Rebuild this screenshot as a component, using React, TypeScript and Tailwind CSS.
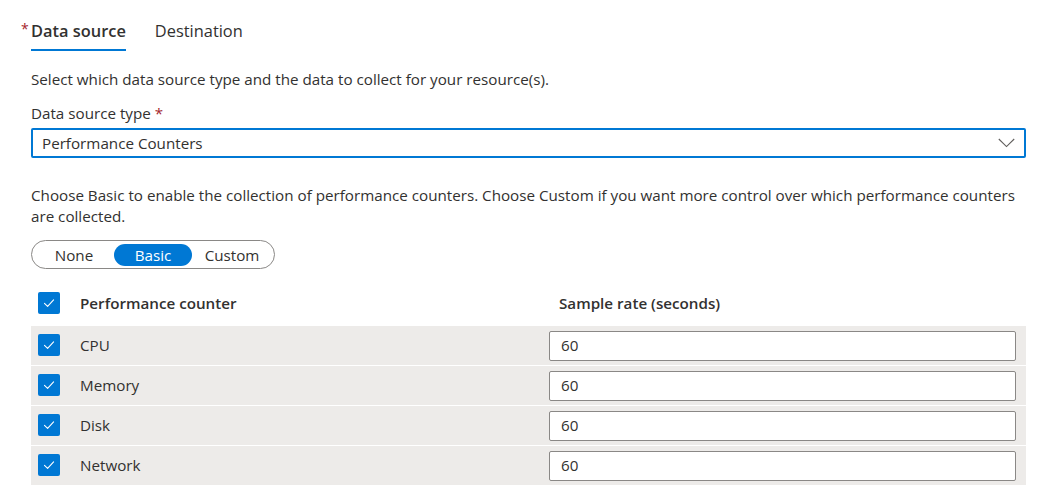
import { useState } from 'react';

const counters = ['CPU', 'Memory', 'Disk', 'Network'];

function Check() {
  return (
    <span className="w-[22px] h-[22px] rounded-[2px] bg-[#0078d4] flex items-center justify-center shrink-0">
      <svg width="14" height="14" viewBox="0 0 14 14" fill="none">
        <path d="M2.5 7.3 L5.6 10.3 L11.6 3.8" stroke="white" strokeWidth="1.1" strokeLinecap="round" strokeLinejoin="round" />
      </svg>
    </span>
  );
}

export default function App() {
  const [mode, setMode] = useState('Basic');

  return (
    <main className="w-[1041px] h-[497px] bg-white text-[#323130] text-[15.2px] overflow-hidden" style={{ fontFamily: '"Open Sans", "Noto Sans", sans-serif' }}>
      <div className="pl-[31px] pr-[15px] pt-[20px]">
        {/* Tabs */}
        <div className="flex items-end gap-[29px]">
          <div className="relative">
            <span className="absolute -left-[10px] top-[-2px] text-[#a4262c] text-[14px]">*</span>
            <div className="text-[16.4px] leading-[22px] font-semibold pb-[7px] border-b-2 border-[#0078d4]">Data source</div>
          </div>
          <div className="text-[16.4px] leading-[22px] pb-[9px]">Destination</div>
        </div>

        <p className="mt-[18px] leading-[20px]">Select which data source type and the data to collect for your resource(s).</p>

        <div className="mt-[14px] leading-[20px]">
          Data source type <span className="text-[#a4262c]">*</span>
        </div>
        <div className="mt-[5px] h-[30px] border-2 border-[#0078d4] rounded-[2px] flex items-center justify-between pl-[9px] pr-[9px]">
          <span>Performance Counters</span>
          <svg width="17" height="10" viewBox="0 0 17 10" fill="none">
            <path d="M0.8 1 L8.5 8.6 L16.2 1" stroke="#605e5c" strokeWidth="1.1" />
          </svg>
        </div>

        <p className="mt-[27px] leading-[21px]">
          Choose Basic to enable the collection of performance counters. Choose Custom if you want more control over which performance counters are collected.
        </p>

        <div className="mt-[13px] inline-flex h-[29px] items-center border border-[#8a8886] rounded-full px-[2px]">
          {['None', 'Basic', 'Custom'].map(o => (
            <button
              key={o}
              onClick={() => setMode(o)}
              className={
                o === mode
                  ? 'w-[78px] h-[22px] rounded-full bg-[#0078d4] text-white leading-[22px]'
                  : 'w-[80px] h-[22px] rounded-full text-[#323130] leading-[22px]'
              }
            >
              {o}
            </button>
          ))}
        </div>

        {/* Table */}
        <div className="mt-[15px]">
          <div className="h-[42px] pb-[4px] flex items-center">
            <div className="w-[518px] flex items-center pl-[7px]">
              <Check />
              <span className="ml-[20px] font-semibold">Performance counter</span>
            </div>
            <span className="pl-[10px] font-semibold">Sample rate (seconds)</span>
          </div>
          <div className="flex flex-col gap-[1px]">
            {counters.map(c => (
              <div key={c} className="h-[39px] bg-[#edebe9] flex items-center">
                <div className="w-[518px] flex items-center pl-[7px]">
                  <Check />
                  <span className="ml-[20px]">{c}</span>
                </div>
                <div className="flex-1 pr-[10px]">
                  <div className="h-[30px] bg-white border border-[#8a8886] rounded-[2px] flex items-center pl-[11px]">60</div>
                </div>
              </div>
            ))}
          </div>
        </div>
      </div>
    </main>
  );
}
